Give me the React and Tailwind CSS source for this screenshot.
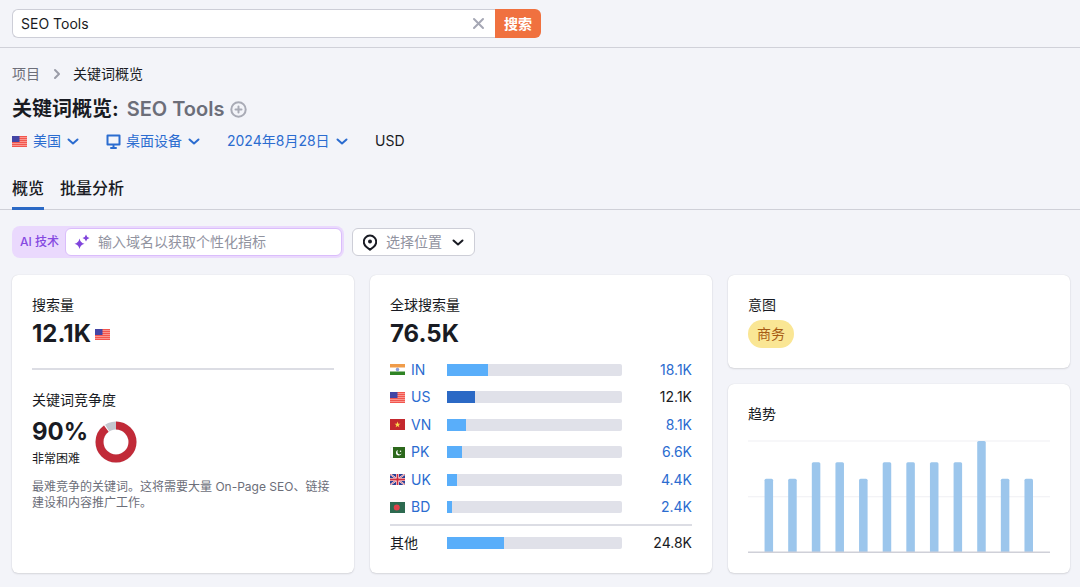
import React, { useState } from 'react';

const countries = [
  { code: 'IN', value: '18.1K', percent: 23.6 },
  { code: 'US', value: '12.1K', percent: 15.8, current: true },
  { code: 'VN', value: '8.1K', percent: 10.6 },
  { code: 'PK', value: '6.6K', percent: 8.7 },
  { code: 'UK', value: '4.4K', percent: 5.7 },
  { code: 'BD', value: '2.4K', percent: 3.1 },
];

const trend = [66, 66, 81, 81, 66, 81, 81, 81, 81, 100, 66, 66];

function Flag({ code }) {
  return (
    <svg width="15" height="11" viewBox="0 0 30 22" className="shrink-0" aria-hidden="true">
      {code === 'US' && (
        <>
          <path fill="#f2564e" d="M0 0h30v22H0z" />
          <path stroke="#fba79f" strokeWidth="1.6" d="M0 3h30M0 7h30M0 11h30M0 15h30M0 19h30" />
          <path fill="#4345a5" d="M0 0h15v12H0z" />
        </>
      )}
      {code === 'IN' && (
        <>
          <path fill="#fff" d="M0 0h30v22H0z" />
          <path fill="#f09c4a" d="M0 0h30v7H0z" />
          <path fill="#2f8424" d="M0 15h30v7H0z" />
          <circle cx="15" cy="11" r="2.6" fill="#8fa3e0" stroke="#4d68bd" />
        </>
      )}
      {code === 'VN' && (
        <>
          <path fill="#c4282e" d="M0 0h30v22H0z" />
          <path fill="#fcd94b" d="m15 5 1.5 4.3H21l-3.6 2.8 1.3 4.4-3.7-2.6-3.7 2.6 1.3-4.4L9 9.3h4.5z" />
        </>
      )}
      {code === 'PK' && (
        <>
          <path fill="#fff" d="M0 0h30v22H0z" />
          <path stroke="#dcdfe1" fill="none" d="M.5.5h29v21H.5z" />
          <path fill="#2c681c" d="M6 0h24v22H6z" />
          <circle cx="17.5" cy="11.5" r="5.5" fill="#fff" />
          <circle cx="19.5" cy="10" r="4.8" fill="#2c681c" />
          <circle cx="21" cy="8.5" r="1.5" fill="#fff" />
        </>
      )}
      {code === 'UK' && (
        <>
          <path fill="#2c3f96" d="M0 0h30v22H0z" />
          <path stroke="#fff" strokeWidth="3.6" d="m0 0 30 22M30 0 0 22" />
          <path stroke="#d63a48" strokeWidth="1.4" d="m0 0 30 22M30 0 0 22" />
          <path stroke="#fff" strokeWidth="6" d="M15 0v22M0 11h30" />
          <path stroke="#d12f40" strokeWidth="3.6" d="M15 0v22M0 11h30" />
        </>
      )}
      {code === 'BD' && (
        <>
          <path fill="#2d6a50" d="M0 0h30v22H0z" />
          <circle cx="13.5" cy="11" r="6" fill="#e0414b" />
        </>
      )}
    </svg>
  );
}

function Chevron() {
  return (
    <svg width="12" height="12" viewBox="0 0 12 12" fill="none" stroke="currentColor" strokeWidth="2" strokeLinecap="round" strokeLinejoin="round" className="pointer-events-none shrink-0" aria-hidden="true">
      <path d="m1.5 4.5 4.5 4 4.500-4" />
    </svg>
  );
}

function Filter({ label, value, icon }) {
  return (
    <div className="flex items-center text-[#2b6cd0]">
      {icon}
      <select aria-label={label} className="mr-[6px] cursor-pointer appearance-none bg-transparent leading-5 outline-none">
        <option>{value}</option>
      </select>
      <Chevron />
    </div>
  );
}

function Card({ className = '', children }) {
  return (
    <section className={`rounded-md bg-white px-5 shadow-[0_0_1px_rgba(25,27,35,0.16),0_1px_2px_rgba(25,27,35,0.12)] ${className}`}>
      {children}
    </section>
  );
}

function Bar({ percent, dark }) {
  return (
    <div className="h-3 overflow-hidden rounded-r-xs bg-[#e0e1e9]">
      <div className={`h-full ${dark ? 'bg-[#2b69c5]' : 'bg-[#59aefa]'}`} style={{ width: `${percent}%` }} />
    </div>
  );
}

function TrendChart() {
  return (
    <svg viewBox="0 0 301 113" className="mt-4 h-auto w-full" role="img" aria-label="趋势">
      <path d="M0 1h301M0 56.5h301" stroke="#efeff3" />
      {trend.map((v, i) => (
        <path
          key={i}
          fill="#9cc6ec"
          d={`M${16.5 + i * 23.55} 112v-${v * 1.11 - 1.5}q0-1.5 1.5-1.5h5.5q1.5 0 1.5 1.5V112z`}
        />
      ))}
      <path d="M0 112h301" stroke="#cfd0d8" strokeWidth="1.5" />
    </svg>
  );
}

function App() {
  const [keyword, setKeyword] = useState('SEO Tools');
  const [tab, setTab] = useState('概览');

  return (
    <div className="min-h-screen bg-[#f3f4f9] font-['Inter','Noto_Sans_CJK_SC',sans-serif] text-sm leading-5 text-[#191b23]">
      <header className="border-b border-[#d0d1d9] px-3 py-[9px]">
        <form className="flex h-[29px] max-w-[529px]" onSubmit={(e) => e.preventDefault()}>
          <div className="flex min-w-0 flex-1 items-center rounded-l-md border border-r-0 border-[#cdced7] bg-white pr-[10px] pl-2">
            <input
              type="text"
              aria-label="关键词"
              value={keyword}
              onChange={(e) => setKeyword(e.target.value)}
              className="min-w-0 flex-1 leading-5 outline-none"
            />
            <button type="button" aria-label="清除" onClick={() => setKeyword('')} className="text-[#a5a7b4]">
              <svg width="13" height="13" viewBox="0 0 13 13" fill="none" stroke="currentColor" strokeWidth="2" strokeLinecap="round">
                <path d="m2 2 9 9M11 2l-9 9" />
              </svg>
            </button>
          </div>
          <button type="submit" className="rounded-r-md bg-[#f0713f] px-[9px] font-bold text-white">搜索</button>
        </form>
      </header>

      <div className="px-3 pt-4">
        <nav className="flex items-center gap-3">
          <a href="#" className="text-[#6c6e79]">项目</a>
          <svg width="9" height="12" viewBox="0 0 9 12" fill="none" stroke="#9a9ca8" strokeWidth="2" strokeLinecap="round" strokeLinejoin="round" aria-hidden="true">
            <path d="m3 2 4 4-4 4" />
          </svg>
          <span>关键词概览</span>
        </nav>

        <div className="mt-2 flex items-center gap-[6px]">
          <h1 className="flex gap-2 text-xl leading-[34px] font-bold">
            关键词概览: <span className="font-semibold text-[#6c6e79]">SEO Tools</span>
          </h1>
          <button type="button" aria-label="添加" className="text-[#a9abb6]">
            <svg width="17" height="17" viewBox="0 0 17 17" fill="none" stroke="currentColor" strokeWidth="2" strokeLinecap="round">
              <circle cx="8.5" cy="8.5" r="7.2" />
              <path d="M8.5 5.5v6M5.5 8.5h6" />
            </svg>
          </button>
        </div>

        <div className="mt-[5px] flex items-center gap-[27px]">
          <Filter label="国家" value="美国" icon={<span className="mr-[6px]"><Flag code="US" /></span>} />
          <Filter
            label="设备"
            value="桌面设备"
            icon={
              <svg width="15" height="15" viewBox="0 0 15 15" fill="none" stroke="currentColor" strokeWidth="2" strokeLinecap="round" strokeLinejoin="round" className="mr-[5px] shrink-0" aria-hidden="true">
                <path d="M1.5 1.5h12v9h-12zM7.5 12v2M5 14h5" />
              </svg>
            }
          />
          <Filter label="日期" value="2024年8月28日" />
          <span>USD</span>
        </div>
      </div>

      <div role="tablist" className="mt-[25px] flex gap-4 border-b border-[#cfd0d8] px-3 text-base leading-6 font-medium">
        {['概览', '批量分析'].map((t) => (
          <button
            key={t}
            type="button"
            role="tab"
            aria-selected={tab === t}
            onClick={() => setTab(t)}
            className={`-mb-px border-b-3 pb-[7px] ${tab === t ? 'border-[#2b69c5]' : 'border-transparent'}`}
          >
            {t}
          </button>
        ))}
      </div>

      <main className="pt-4 pr-[10px] pb-[14px] pl-3">
        <div className="flex items-center gap-2">
          <div className="flex h-8 w-[332px] items-center rounded-lg bg-[#ead9fd] pr-[2px] pl-2">
            <label htmlFor="domain" className="shrink-0 text-xs font-medium text-[#8649e1]">AI 技术</label>
            <div className="ml-[6px] flex h-7 min-w-0 flex-1 items-center rounded-md border border-[#dabdfb] bg-white px-2">
              <svg width="16" height="16" viewBox="0 0 16 16" fill="#8045dc" className="mr-2 shrink-0" aria-hidden="true">
                <path d="M5.5 4.500q1 4.500 5 5.300-4 .8-5 5.200-1-4.400-5-5.200 4-.8 5-5.300zM12 .5q.6 2.900 3.500 3.500-2.900.6-3.500 3.500-.6-2.900-3.500-3.500Q11.400 3.400 12 .5z" />
              </svg>
              <input id="domain" type="text" placeholder="输入域名以获取个性化指标" className="min-w-0 flex-1 leading-5 outline-none placeholder:text-[#91939f]" />
            </div>
          </div>
          <div className="flex h-7 items-center rounded-md border border-[#cdced7] bg-white px-[10px]">
            <svg width="14" height="17" viewBox="0 0 14 17" fill="none" stroke="currentColor" strokeWidth="2" strokeLinejoin="round" className="mr-[9px] shrink-0" aria-hidden="true">
              <path d="M7 15.8 3.2 12.7A6.200 6.200 0 1 1 10.800 12.700z" />
              <circle cx="7" cy="7.5" r="2" fill="currentColor" stroke="none" />
            </svg>
            <select aria-label="位置" className="mr-[10px] appearance-none bg-transparent leading-5 text-[#91939f] outline-none">
              <option>选择位置</option>
            </select>
            <Chevron />
          </div>
        </div>

        <div className="mt-[17px] grid grid-cols-3 gap-4">
          <Card className="pt-5 pb-3">
            <h2>搜索量</h2>
            <div className="flex items-center gap-1 text-2xl leading-[38px] font-bold">
              12.1K <Flag code="US" />
            </div>
            <hr className="mt-[15px] border-t-2 border-[#dcdde4]" />
            <h2 className="mt-5">关键词竞争度</h2>
            <div className="mt-[3px] flex items-center gap-[7px]">
              <div>
                <div className="text-2xl leading-[38px] font-bold">90%</div>
                <div className="text-xs leading-4">非常困难</div>
              </div>
              <svg width="42" height="42" viewBox="0 0 42 42" fill="none" strokeWidth="8" className="mt-1" aria-hidden="true">
                <circle cx="21" cy="21" r="16.5" stroke="#c4c7cf" />
                <circle cx="21" cy="21" r="16.5" stroke="#fff" pathLength="100" strokeDasharray="91 9" transform="rotate(-90 21 21)" />
                <circle cx="21" cy="21" r="16.5" stroke="#c12a38" pathLength="100" strokeDasharray="90 10" transform="rotate(-90 21 21)" />
              </svg>
            </div>
            <p className="mt-3 text-xs leading-4 text-[#6c6e79]">
              最难竞争的关键词。这将需要大量 On-Page SEO、链接建设和内容推广工作。
            </p>
          </Card>

          <Card className="pt-5 pb-[14px]">
            <h2>全球搜索量</h2>
            <div className="text-2xl leading-[38px] font-bold">76.5K</div>
            <table className="mt-[3px] w-full table-fixed border-collapse">
              <colgroup>
                <col className="w-[57px]" />
                <col />
                <col className="w-[70px]" />
              </colgroup>
              <tbody>
                {countries.map((c) => (
                  <tr key={c.code} className="h-[27px] even:h-7">
                    <th scope="row" className="p-0 font-normal">
                      <div className="flex items-center gap-[6px]">
                        <Flag code={c.code} />
                        <a href="#" className="text-[#2b6cd0]">{c.code}</a>
                      </div>
                    </th>
                    <td className="p-0"><Bar percent={c.percent} dark={c.current} /></td>
                    <td className="p-0 text-right">
                      {c.current ? c.value : <a href="#" className="text-[#2b6cd0]">{c.value}</a>}
                    </td>
                  </tr>
                ))}
              </tbody>
              <tfoot className="before:block before:h-[3px] before:content-['']">
                <tr className="h-[34px] border-t-2 border-[#dcdde4]">
                  <th scope="row" className="p-0 text-left font-normal">其他</th>
                  <td className="p-0"><Bar percent={32.4} /></td>
                  <td className="p-0 text-right">24.8K</td>
                </tr>
              </tfoot>
            </table>
          </Card>

          <div className="flex flex-col gap-4">
            <Card className="py-5">
              <h2>意图</h2>
              <span className="mt-[5px] flex h-7 w-fit items-center rounded-full bg-[#fae694] px-[9px] text-[#a75b14]">商务</span>
            </Card>
            <Card className="flex-1 pt-5">
              <h2>趋势</h2>
              <TrendChart />
            </Card>
          </div>
        </div>
      </main>
    </div>
  );
}

export default App;
